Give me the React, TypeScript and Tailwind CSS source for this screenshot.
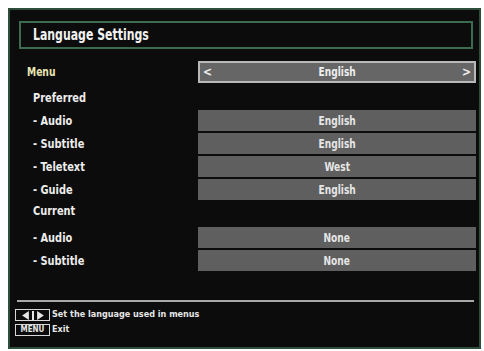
const ROWS_PREF = [
  { label: "- Audio", value: "English" },
  { label: "- Subtitle", value: "English" },
  { label: "- Teletext", value: "West" },
  { label: "- Guide", value: "English" },
];

const ROWS_CUR = [
  { label: "- Audio", value: "None" },
  { label: "- Subtitle", value: "None" },
];

function Row({ label, value }: { label: string; value: string }) {
  return (
    <div className="flex items-center h-[23px]">
      <div className="w-[188px] pl-[23px] text-[13px] text-[#ededed]">
        <span className="inline-block origin-left scale-x-[0.84]">{label}</span>
      </div>
      <div className="w-[278px] h-[21px] bg-[#5f5f5f] flex items-center justify-center text-[12px] text-[#e6e6e6]">
        <span className="inline-block scale-x-[0.84]">{value}</span>
      </div>
    </div>
  );
}

export default function App() {
  return (
    <div className="w-[484px] h-[351px] bg-white pt-[8px] pl-[8px] font-['DejaVu_Sans_Condensed','DejaVu_Sans',sans-serif] font-bold">
      <div className="w-[473px] h-[341px] bg-[#0c0c0c] border-2 border-[#2f4d3b] flex flex-col pt-[11px]">
        {/* Title */}
        <div className="ml-[9px] w-[454px] h-[28px] border-2 border-[#3d6b50] flex items-center pl-[12px]">
          <span className="inline-block origin-left scale-x-[0.81] text-[15px] text-[#f2f2f2]">Language Settings</span>
        </div>

        {/* Menu row */}
        <div className="flex items-center mt-[11px] h-[23px]">
          <div className="w-[188px] pl-[17px] text-[12px] text-[#e9e6b4]">
            <span className="inline-block origin-left scale-x-[0.85]">Menu</span>
          </div>
          <div className="w-[278px] h-[22px] border-2 border-[#b9b9b9] bg-[#666666] flex items-center justify-between px-[3px] text-[12px] text-[#eeeeee]">
            <span>&lt;</span>
            <span className="inline-block scale-x-[0.84]">English</span>
            <span>&gt;</span>
          </div>
        </div>

        <div className="pl-[23px] text-[13px] text-[#ededed] mt-[4px] h-[22px] leading-[22px]">
          <span className="inline-block origin-left scale-x-[0.84]">Preferred</span>
        </div>
        <div className="flex flex-col">
          {ROWS_PREF.map((r) => (
            <Row key={r.label} label={r.label} value={r.value} />
          ))}
        </div>

        <div className="pl-[23px] text-[13px] text-[#ededed] h-[25px] leading-[20px]">
          <span className="inline-block origin-left scale-x-[0.84]">Current</span>
        </div>
        <div className="flex flex-col">
          {ROWS_CUR.map((r) => (
            <Row key={r.label} label={r.label} value={r.value} />
          ))}
        </div>

        {/* Separator */}
        <div className="ml-[7px] mt-[28px] w-[457px] h-[2px] bg-[#a9a9a9]" />

        {/* Footer */}
        <div className="flex flex-col gap-[3px] ml-[5px] mt-[7px] text-[9px] text-[#e6e6e6]">
          <div className="flex items-center gap-[2px] h-[12px]">
            <div className="flex items-center h-[12px] w-[35px] border border-[#d8d8d8] justify-center gap-[2px]">
              <svg width="9" height="9" viewBox="0 0 8 8">
                <path d="M7 0 L1 4 L7 8 Z" fill="#e6e6e6" />
              </svg>
              <div className="w-[2px] h-[9px] bg-[#e6e6e6]" />
              <svg width="9" height="9" viewBox="0 0 8 8">
                <path d="M1 0 L7 4 L1 8 Z" fill="#e6e6e6" />
              </svg>
            </div>
            <span>Set the language used in menus</span>
          </div>
          <div className="flex items-center gap-[2px] h-[12px]">
            <div className="h-[12px] w-[35px] border border-[#d8d8d8] flex items-center justify-center text-[8px] leading-none">
              MENU
            </div>
            <span>Exit</span>
          </div>
        </div>
      </div>
    </div>
  );
}
